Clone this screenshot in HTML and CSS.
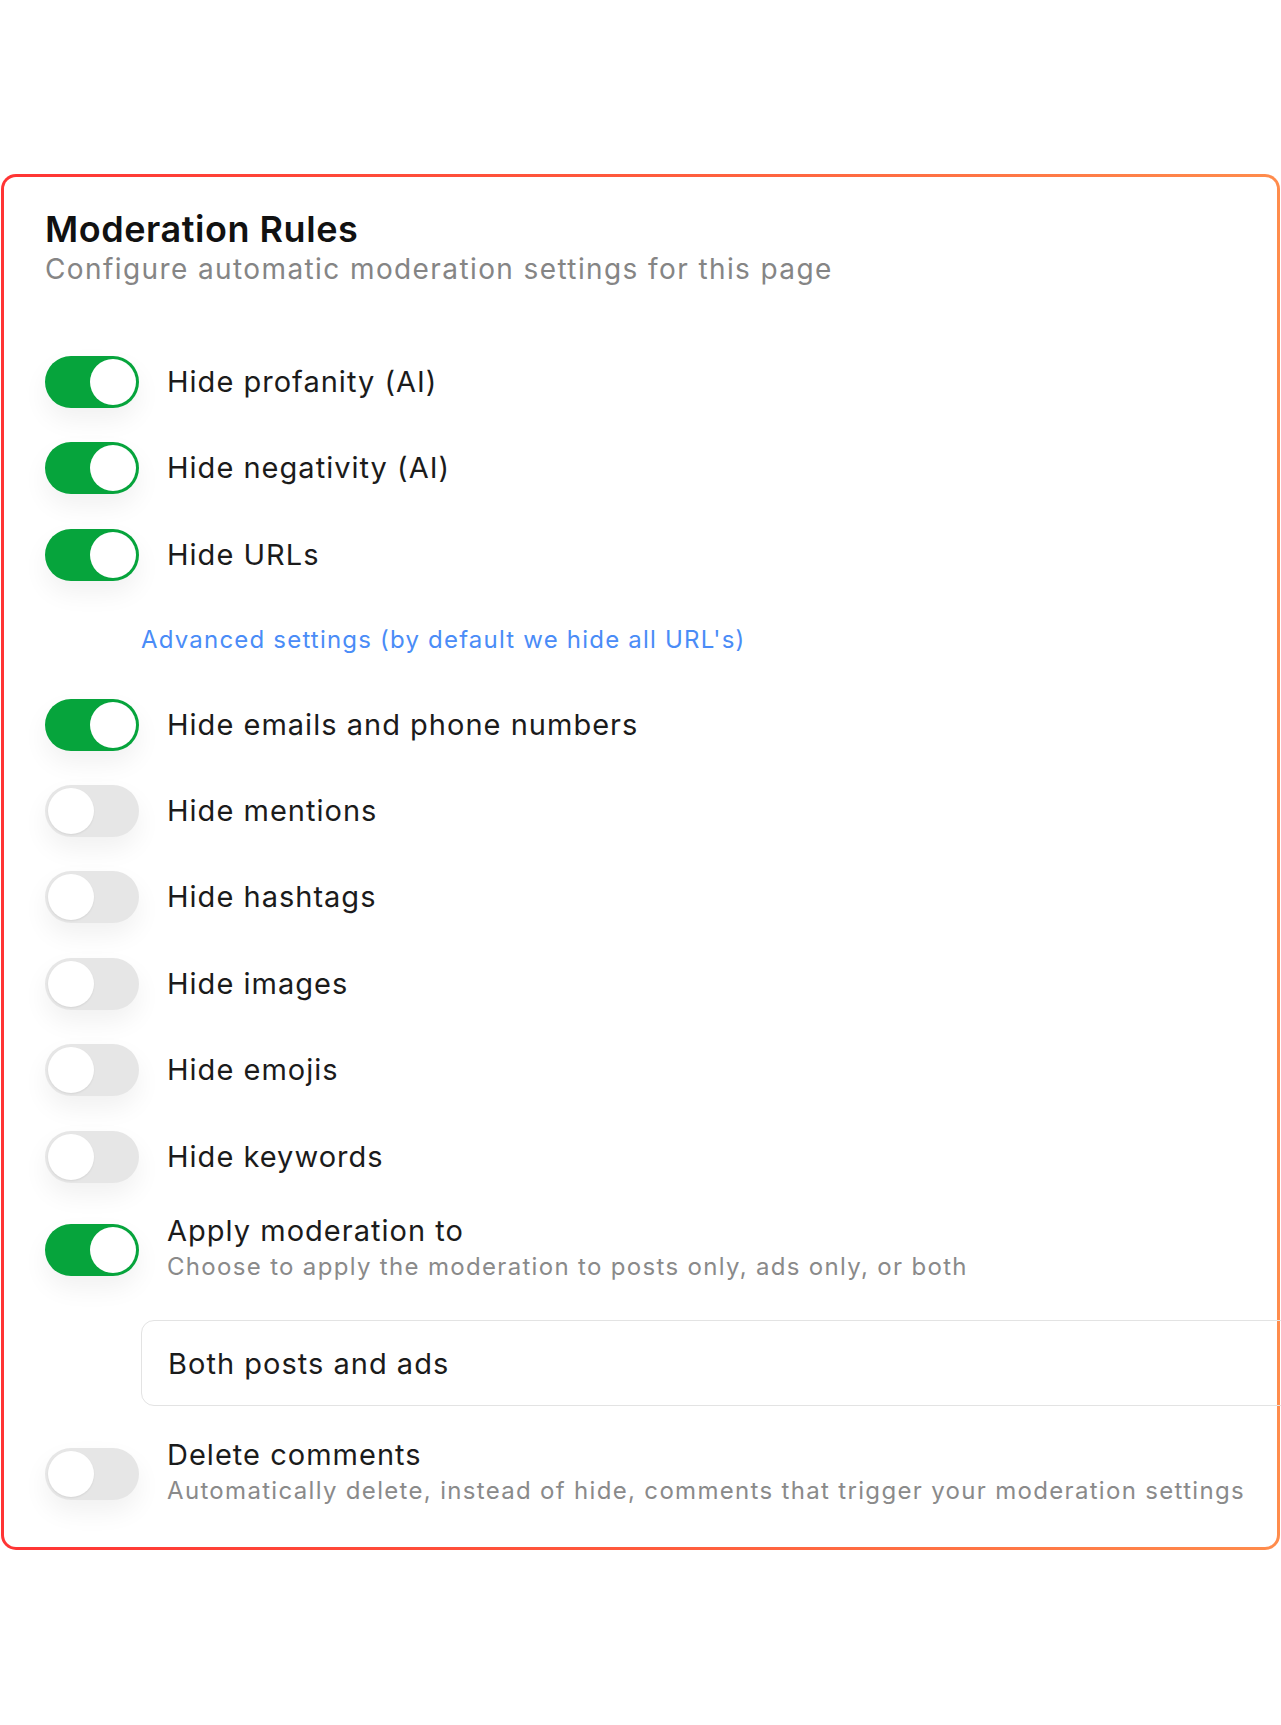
FILE: index.html
```html
<!DOCTYPE html>
<html lang="en">
<head>
<meta charset="utf-8">
<title>Moderation Rules</title>
<link rel="stylesheet" href="styles.css">
</head>
<body>
<section class="card">
  <header class="head">
    <h1 class="title">Moderation Rules</h1>
    <p class="subtitle">Configure automatic moderation settings for this page</p>
  </header>
  <ul class="rules">
    <li class="rule"><span class="switch on"><span class="knob"></span></span><span class="label">Hide profanity (AI)</span></li>
    <li class="rule"><span class="switch on"><span class="knob"></span></span><span class="label">Hide negativity (AI)</span></li>
    <li class="rule"><span class="switch on"><span class="knob"></span></span><span class="label">Hide URLs</span></li>
    <li class="advanced"><a class="link" href="#">Advanced settings (by default we hide all URL's)</a></li>
    <li class="rule"><span class="switch on"><span class="knob"></span></span><span class="label">Hide emails and phone numbers</span></li>
    <li class="rule"><span class="switch"><span class="knob"></span></span><span class="label">Hide mentions</span></li>
    <li class="rule"><span class="switch"><span class="knob"></span></span><span class="label">Hide hashtags</span></li>
    <li class="rule"><span class="switch"><span class="knob"></span></span><span class="label">Hide images</span></li>
    <li class="rule"><span class="switch"><span class="knob"></span></span><span class="label">Hide emojis</span></li>
    <li class="rule"><span class="switch"><span class="knob"></span></span><span class="label">Hide keywords</span></li>
    <li class="rule rule-desc"><span class="switch on"><span class="knob"></span></span>
      <div class="text"><span class="label">Apply moderation to</span><span class="desc">Choose to apply the moderation to posts only, ads only, or both</span></div>
    </li>
    <li class="select-row"><div class="select">Both posts and ads</div></li>
    <li class="rule rule-desc"><span class="switch"><span class="knob"></span></span>
      <div class="text"><span class="label">Delete comments</span><span class="desc">Automatically delete, instead of hide, comments that trigger your moderation settings</span></div>
    </li>
  </ul>
</section>
</body>
</html>
```
FILE: styles.css
```css
html, body {
  margin: 0;
  padding: 0;
  background: #ffffff;
  overflow-x: hidden;
}

body {
  font-family: Inter, "Noto Sans", "Liberation Sans", sans-serif;
  color: #1b1b1b;
  padding-top: 174px;
  padding-bottom: 170px;
}

.card {
  margin: 0 1px;
  border: 3px solid transparent;
  border-radius: 15px;
  background:
    linear-gradient(#ffffff, #ffffff) padding-box,
    linear-gradient(90deg, #ff3434 0%, #ff5a3c 50%, #ff8c4c 100%) border-box;
  padding: 32px 41px 40px 41px;
}

.head {
  margin: 0;
}

.title {
  margin: 0;
  font-size: 36px;
  line-height: 40px;
  font-weight: 600;
  color: #111111;
  letter-spacing: 0.015em;
}

.subtitle {
  margin: 4px 0 0 0;
  font-size: 28px;
  line-height: 32px;
  color: #858585;
  letter-spacing: 0.05em;
}

.rules {
  list-style: none;
  margin: 71px 0 0 0;
  padding: 0;
  display: flex;
  flex-direction: column;
  gap: 34.4px;
}

.rule {
  display: flex;
  align-items: center;
  gap: 28px;
  min-height: 52px;
}

.switch {
  flex: none;
  width: 94px;
  height: 52px;
  box-sizing: border-box;
  padding: 3px;
  border-radius: 26px;
  background: #e6e6e6;
  display: flex;
  justify-content: flex-start;
  box-shadow: 0 12px 26px rgba(0, 0, 0, 0.06);
}

.switch.on {
  background: #06a43c;
  justify-content: flex-end;
}

.knob {
  width: 46px;
  height: 46px;
  border-radius: 50%;
  background: #ffffff;
  box-shadow: 0 1px 2px rgba(0, 0, 0, 0.08);
}

.switch.on .knob {
  box-shadow: none;
}

.label {
  font-size: 29px;
  line-height: 36px;
  color: #1b1b1b;
  letter-spacing: 0.035em;
  white-space: nowrap;
}

.text {
  flex: none;
  display: flex;
  flex-direction: column;
  margin-top: -4px;
}

.desc {
  margin-top: 2px;
  font-size: 24px;
  line-height: 32px;
  color: #8a8a8a;
  letter-spacing: 0.055em;
  white-space: nowrap;
}

.advanced {
  height: 49px;
  display: flex;
  align-items: center;
  padding-left: 96px;
}

.link {
  font-size: 24px;
  line-height: 30px;
  color: #4a8cf7;
  text-decoration: none;
  letter-spacing: 0.05em;
}

.select-row {
  margin-top: 3px;
  padding-left: 96px;
}

.select {
  width: 1160px;
  height: 86px;
  box-sizing: border-box;
  border: 1.5px solid #e3e3e3;
  border-radius: 13px;
  background: transparent;
  padding-left: 26px;
  display: flex;
  align-items: center;
  font-size: 29px;
  color: #1b1b1b;
  letter-spacing: 0.035em;
}
```
